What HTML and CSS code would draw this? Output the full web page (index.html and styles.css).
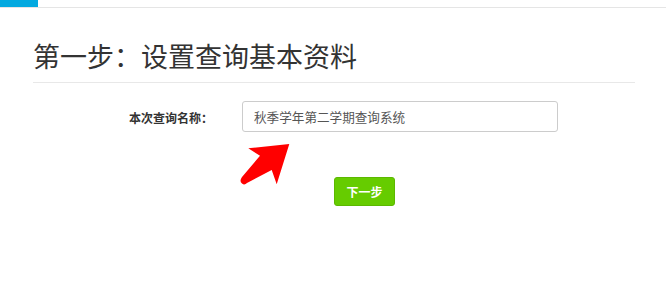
FILE: index.html
```
<!DOCTYPE html>
<html lang="zh-CN">
<head>
<meta charset="utf-8">
<title>第一步：设置查询基本资料</title>
<link rel="stylesheet" href="styles.css">
</head>
<body>
<div class="topbar"><div class="tab"></div></div>
<div class="page">
  <h1 class="title">第一步：设置查询基本资料</h1>
  <form class="form">
    <div class="row">
      <label class="label">本次查询名称：</label>
      <div class="input">秋季学年第二学期查询系统</div>
    </div>
    <div class="actions">
      <button type="button" class="btn">下一步</button>
    </div>
  </form>
</div>
<svg class="arrow" width="60" height="50" viewBox="0 0 60 50">
  <path d="M53.3 4 L12.3 8.3 L24 15.7 L6 37 Q3 41 6 43.5 Q8.5 45.5 11 43 L35.7 30 L40.7 44.3 Z" fill="#ff0000"/>
</svg>
</body>
</html>
```
FILE: styles.css
```
html, body {
  margin: 0;
  padding: 0;
  background: #fff;
}
body {
  font-family: "Noto Sans CJK SC", "Liberation Sans", sans-serif;
  color: #333;
  position: relative;
  width: 666px;
  height: 288px;
  overflow: hidden;
}
.topbar {
  height: 7px;
  border-bottom: 1px solid #e5e5e5;
}
.tab {
  width: 38px;
  height: 7px;
  background: #03a9e0;
}
.page {
  padding: 0 31px 0 32px;
}
.title {
  margin: 33px 0 0;
  padding: 0 0 11px 1px;
  font-size: 27px;
  line-height: 30px;
  font-weight: normal;
  color: #333;
  border-bottom: 1px solid #e8e8e8;
  margin-left: 1px;
  padding-left: 0;
}
.form {
  margin: 18px 0 0;
}
.row {
  display: flex;
  align-items: center;
}
.label {
  width: 181px;
  text-align: right;
  font-size: 12px;
  font-weight: bold;
  color: #333;
  margin-right: 29px;
  padding-top: 2px;
}
.input {
  width: 291px;
  height: 29px;
  line-height: 29px;
  padding: 0 12px 0 11px;
  border: 1px solid #cccccc;
  border-radius: 3px;
  font-size: 12.6px;
  color: #555;
}
.actions {
  margin-top: 45px;
  padding-left: 302px;
}
.btn {
  width: 61px;
  height: 29px;
  padding: 0;
  border: 1px solid #5cb800;
  border-radius: 3px;
  background: #66cc00;
  color: #fff;
  font-family: "Noto Sans CJK SC", "Liberation Sans", sans-serif;
  font-size: 12px;
  font-weight: bold;
}
.arrow {
  position: absolute;
  left: 236px;
  top: 140px;
}
```
